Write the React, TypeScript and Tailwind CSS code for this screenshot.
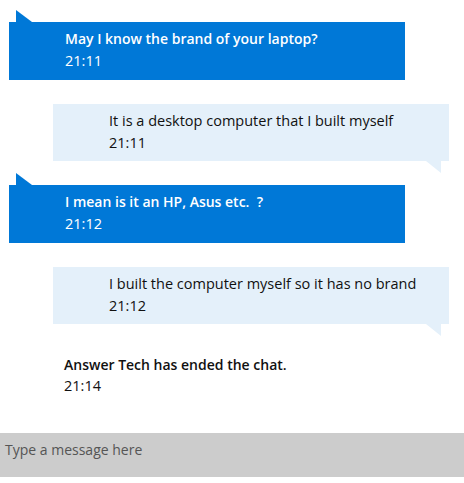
import React from "react";

function Incoming({ text, time }: { text: string; time: string }) {
  return (
    <div className="ml-[9px] w-[396px] flex flex-col">
      <div className="h-[12px] pl-[7px] flex">
        <svg width="16" height="12" viewBox="0 0 16 12" className="block">
          <polygon points="0,0 0,12 16,12" fill="#0078d7" />
        </svg>
      </div>
      <div className="bg-[#0078d7] h-[58px] pl-[56px] pt-[6px] text-white">
        <div className="text-[14px] leading-[22px] font-semibold whitespace-pre">{text}</div>
        <div className="text-[14.5px] leading-[22px]">{time}</div>
      </div>
    </div>
  );
}

function Outgoing({ text, time }: { text: string; time: string }) {
  return (
    <div className="ml-[53px] w-[396px] flex flex-col">
      <div className="bg-[#e4f0fa] h-[57px] pl-[56px] pt-[6px] text-[#111]">
        <div className="text-[14.5px] leading-[22px] whitespace-pre">{text}</div>
        <div className="text-[14.5px] leading-[22px]">{time}</div>
      </div>
      <div className="h-[12px] pr-[8px] flex justify-end">
        <svg width="15" height="12" viewBox="0 0 15 12" className="block">
          <polygon points="0,0 15,0 15,12" fill="#e4f0fa" />
        </svg>
      </div>
    </div>
  );
}

export default function App() {
  return (
    <div className="w-[464px] h-[483px] bg-white flex flex-col font-['Open_Sans',sans-serif]">
      <div className="flex-1 flex flex-col pt-[10px]">
        <Incoming text="May I know the brand of your laptop?" time="21:11" />
        <div className="mt-[24px]">
          <Outgoing text="It is a desktop computer that I built myself" time="21:11" />
        </div>
        <Incoming text="I mean is it an HP, Asus etc.  ?" time="21:12" />
        <div className="mt-[24px]">
          <Outgoing text="I built the computer myself so it has no brand" time="21:12" />
        </div>
        <div className="ml-[64px] mt-[18px] text-[#111]">
          <div className="text-[14px] leading-[21px] font-semibold">Answer Tech has ended the chat.</div>
          <div className="text-[14.5px] leading-[21px]">21:14</div>
        </div>
      </div>
      <div className="h-[44px] bg-[#cccccc] flex items-start pt-[7px] pl-[5px] mb-[6px]">
        <span className="text-[14px] leading-[19px] text-[#555]">Type a message here</span>
      </div>
    </div>
  );
}
